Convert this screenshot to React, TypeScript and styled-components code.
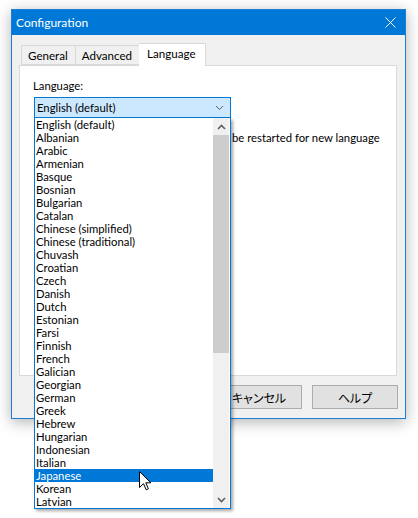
import React from 'react';
import styled, { createGlobalStyle } from 'styled-components';

const GlobalStyle = createGlobalStyle`
  html, body {
    margin: 0;
    padding: 0;
    background: #ffffff;
  }
  body {
    font-family: Lato, 'Liberation Sans', sans-serif;
    font-size: 11.3px;
    color: #000;
  }
`;

const languages = [
  'English (default)', 'Albanian', 'Arabic', 'Armenian', 'Basque', 'Bosnian',
  'Bulgarian', 'Catalan', 'Chinese (simplified)', 'Chinese (traditional)',
  'Chuvash', 'Croatian', 'Czech', 'Danish', 'Dutch', 'Estonian', 'Farsi',
  'Finnish', 'French', 'Galician', 'Georgian', 'German', 'Greek', 'Hebrew',
  'Hungarian', 'Indonesian', 'Italian', 'Japanese', 'Korean', 'Latvian',
];

// Styles
const Desktop = styled.div`
  width: 418px;
  height: 518px;
  padding: 9px 0 0 11px;
  box-sizing: border-box;
  overflow: hidden;
`;

const Window = styled.div`
  width: 395px;
  box-sizing: border-box;
  border: 1px solid #1c7fd6;
  background: #f0f0f0;
  box-shadow: 0 3px 14px rgba(0, 0, 0, 0.3);
  display: flex;
  flex-direction: column;
`;

const TitleBar = styled.div`
  height: 25px;
  background: #0078d7;
  color: #fff;
  display: flex;
  align-items: center;
  padding: 0 9px 0 4px;
  font-size: 12px;
`;

const Title = styled.span`
  flex-grow: 1;
`;

const Body = styled.div`
  padding: 8px 8px 9px 7px;
  display: flex;
  flex-direction: column;
`;

const TabRow = styled.div`
  height: 22px;
  display: flex;
  align-items: flex-end;
  padding-left: 2px;
`;

const Tab = styled.div<{ $active?: boolean }>`
  box-sizing: border-box;
  height: ${(p) => (p.$active ? '23px' : '20px')};
  margin-bottom: ${(p) => (p.$active ? '-1px' : '0')};
  margin-left: ${(p) => (p.$active ? '-1px' : '0')};
  padding: ${(p) => (p.$active ? '2px 9px 0 8px' : '2px 7px 0 6px')};
  border: 1px solid #d9d9d9;
  border-bottom: ${(p) => (p.$active ? 'none' : '1px solid #d9d9d9')};
  background: ${(p) => (p.$active ? '#ffffff' : '#f0f0f0')};
  position: relative;
  z-index: ${(p) => (p.$active ? 2 : 1)};
  line-height: 15px;
  font-size: 11.6px;
  & + & {
    border-left: none;
  }
`;

const Panel = styled.div`
  height: 311px;
  box-sizing: border-box;
  background: #fff;
  border: 1px solid #d9d9d9;
  padding: 12px 13px;
  position: relative;
  z-index: 1;
`;

const Label = styled.div`
  line-height: 15px;
  margin-bottom: 4px;
`;

const ComboWrap = styled.div`
  position: relative;
  width: 197px;
  z-index: 10;
  margin-left: 1px;
`;

const Combo = styled.div`
  box-sizing: border-box;
  height: 21px;
  border: 1px solid #0078d7;
  background: #cce8ff;
  display: flex;
  align-items: center;
  padding: 0 6px 0 2px;
  line-height: 15px;
`;

const ComboText = styled.span`
  flex-grow: 1;
`;

const DropList = styled.div`
  position: absolute;
  top: 100%;
  left: 0;
  width: 197px;
  box-sizing: border-box;
  border: 1px solid #0078d7;
  border-top: none;
  background: #fff;
  box-shadow: 2px 2px 3px rgba(0, 0, 0, 0.35);
  display: flex;
`;

const Items = styled.div`
  width: 178px;
`;

const Item = styled.div<{ $selected?: boolean }>`
  height: 13px;
  line-height: 13px;
  padding-left: 1px;
  white-space: nowrap;
  position: relative;
  background: ${(p) => (p.$selected ? '#0078d7' : 'transparent')};
  color: ${(p) => (p.$selected ? '#fff' : '#000')};
`;

const ScrollBar = styled.div`
  width: 16px;
  background: #f0f0f0;
  display: flex;
  flex-direction: column;
  margin-right: 1px;
`;

const ScrollButton = styled.div`
  height: 17px;
  display: flex;
  align-items: center;
  justify-content: center;
`;

const Thumb = styled.div`
  height: 218px;
  background: #cdcdcd;
`;

const Track = styled.div`
  flex-grow: 1;
`;

const Cursor = styled.svg`
  position: absolute;
  left: 104px;
  top: 2px;
  z-index: 5;
`;

const Notice = styled.div`
  margin-top: 12px;
  padding-left: 199px;
  line-height: 15px;
  white-space: nowrap;
`;

const ButtonRow = styled.div`
  margin-top: 9px;
  display: flex;
  justify-content: flex-end;
  gap: 10px;
  margin-right: -1px;
`;

const Button = styled.div`
  box-sizing: border-box;
  width: 86px;
  height: 24px;
  background: #e1e1e1;
  border: 1px solid #adadad;
  display: flex;
  align-items: center;
  justify-content: center;
  font-family: 'Noto Sans CJK JP', sans-serif;
  font-feature-settings: 'palt';
  font-size: 12px;
`;

const Chevron: React.FC<{ up?: boolean; color?: string; width?: number }> = ({
  up,
  color = '#606060',
  width = 1,
}) => (
  <svg width="9" height="6" viewBox="0 0 9 6">
    <path
      d={up ? 'M1 5 L4.5 1.5 L8 5' : 'M1 1 L4.5 4.5 L8 1'}
      fill="none"
      stroke={color}
      strokeWidth={width}
    />
  </svg>
);

const App: React.FC = () => {
  return (
    <>
      <GlobalStyle />
      <Desktop>
        <Window>
          <TitleBar>
            <Title>Configuration</Title>
            <svg width="11" height="11" viewBox="0 0 11 11">
              <path d="M0.5 0.5 L10.5 10.5 M10.5 0.5 L0.5 10.5" stroke="#fff" strokeWidth="1" />
            </svg>
          </TitleBar>

          <Body>
            <TabRow>
              <Tab>General</Tab>
              <Tab>Advanced</Tab>
              <Tab $active>Language</Tab>
            </TabRow>

            <Panel>
              <Label>Language:</Label>
              <ComboWrap>
                <Combo>
                  <ComboText>English (default)</ComboText>
                  <Chevron />
                </Combo>
                <DropList>
                  <Items>
                    {languages.map((lang) => (
                      <Item key={lang} $selected={lang === 'Japanese'}>
                        {lang}
                        {lang === 'Japanese' && (
                          <Cursor width="13" height="20" viewBox="0 0 13 20">
                            <path
                              d="M0.5 0.5 V16.5 L4.5 12.7 L7.2 18.8 L9.4 17.8 L6.8 11.8 H11.8 Z"
                              fill="#fff"
                              stroke="#000"
                              strokeWidth="1"
                              strokeLinejoin="miter"
                            />
                          </Cursor>
                        )}
                      </Item>
                    ))}
                  </Items>
                  <ScrollBar>
                    <ScrollButton>
                      <Chevron up width={1.6} />
                    </ScrollButton>
                    <Thumb />
                    <Track />
                    <ScrollButton>
                      <Chevron width={1.6} />
                    </ScrollButton>
                  </ScrollBar>
                </DropList>
              </ComboWrap>
              <Notice>be restarted for new language</Notice>
            </Panel>

            <ButtonRow>
              <Button>キャンセル</Button>
              <Button>ヘルプ</Button>
            </ButtonRow>
          </Body>
        </Window>
      </Desktop>
    </>
  );
};

export default App;
